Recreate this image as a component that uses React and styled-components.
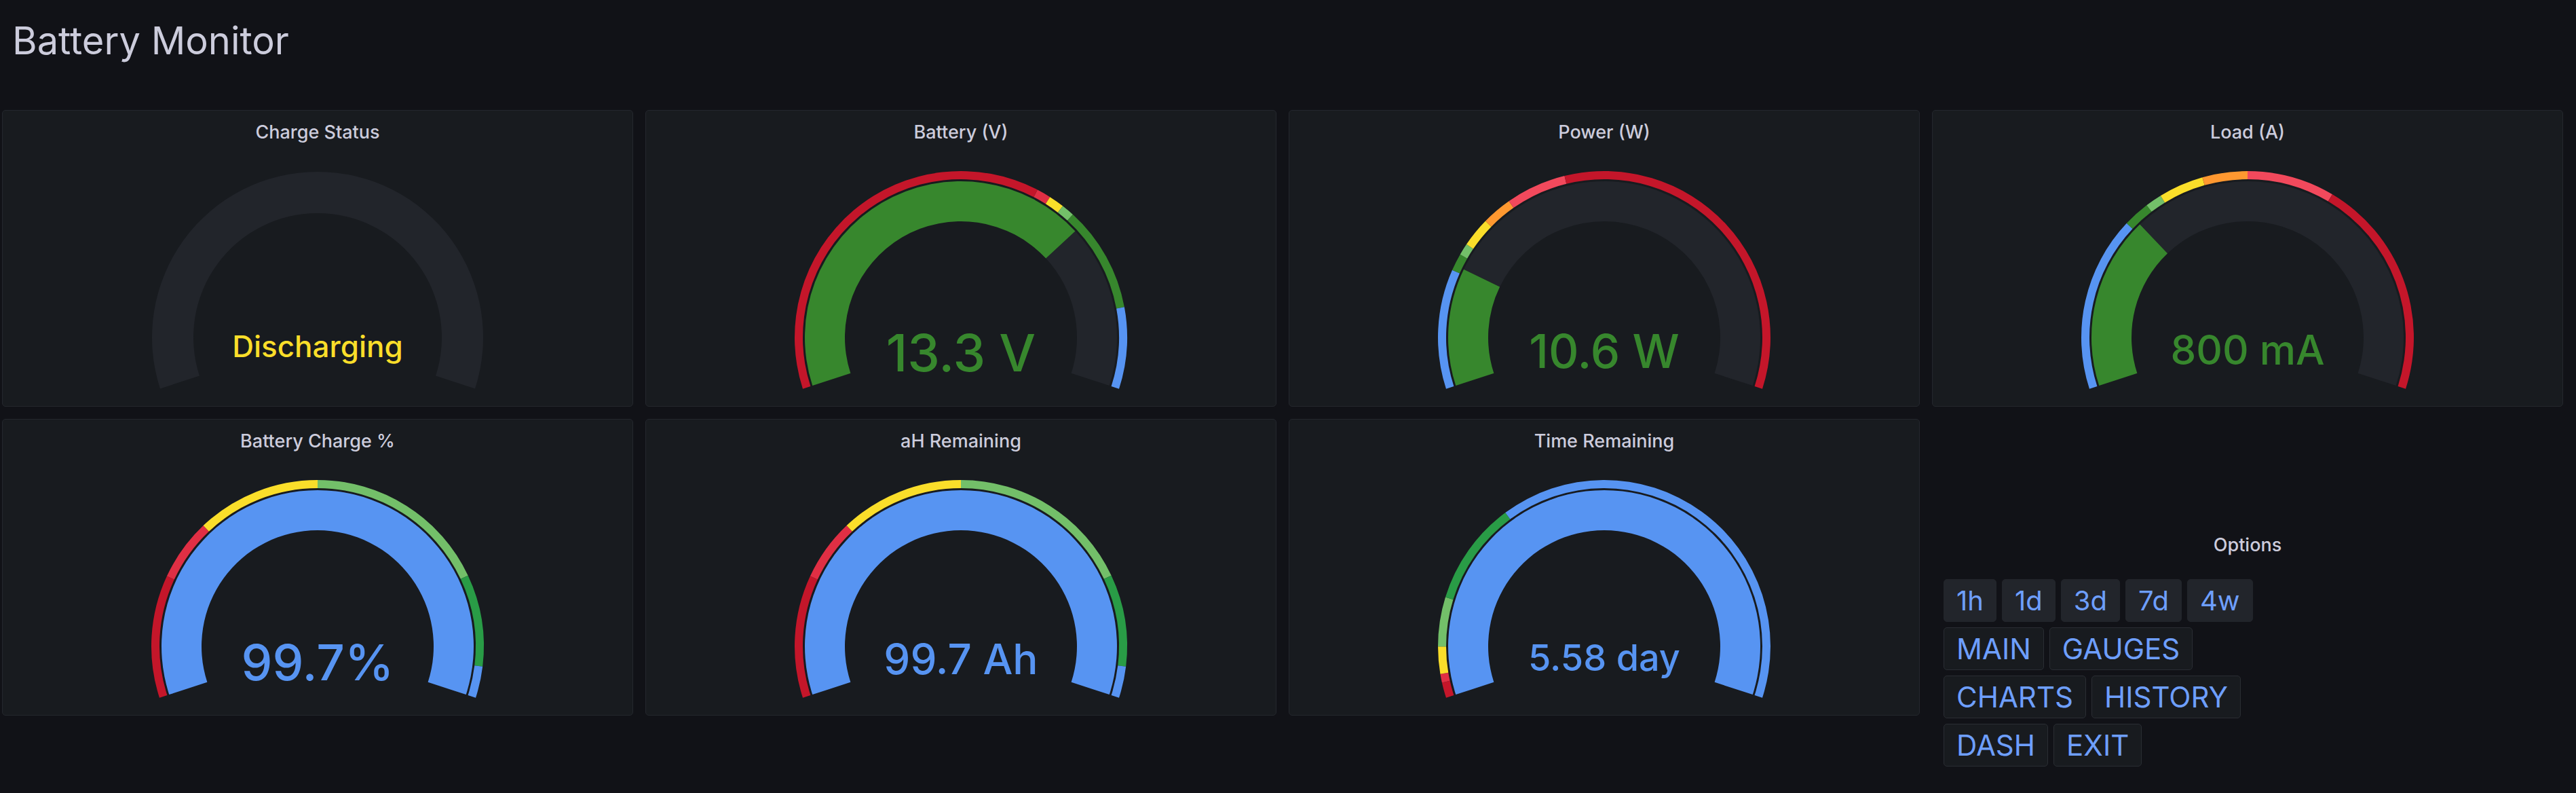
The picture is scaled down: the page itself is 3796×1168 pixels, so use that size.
import React from 'react'
import styled, { createGlobalStyle } from 'styled-components'

const GlobalStyle = createGlobalStyle`
  html, body {
    margin: 0;
    background: #111217;
  }
  body {
    font-family: Inter, 'Noto Sans', sans-serif;
    color: #ccccdc;
    overflow: hidden;
  }
`

const C = {
  darkRed: '#c4162a',
  red: '#e02f44',
  lightRed: '#f2495c',
  orange: '#ff9830',
  yellow: '#fade2a',
  lightGreen: '#73bf69',
  green: '#299c46',
  darkGreen: '#37872d',
  blue: '#5794f2',
  track: '#22252b',
}

// gauge sweeps 216deg, starting 18deg below the left horizontal
const START = 162
const SPAN = 216

const pt = (cx, cy, r, f) => {
  const a = ((START + SPAN * f) * Math.PI) / 180
  return [cx + r * Math.cos(a), cy + r * Math.sin(a)]
}

const sector = (cx, cy, r0, r1, f0, f1) => {
  const [x1, y1] = pt(cx, cy, r1, f0)
  const [x2, y2] = pt(cx, cy, r1, f1)
  const [x3, y3] = pt(cx, cy, r0, f1)
  const [x4, y4] = pt(cx, cy, r0, f0)
  const large = SPAN * (f1 - f0) > 180 ? 1 : 0
  return `M${x1} ${y1} A${r1} ${r1} 0 ${large} 1 ${x2} ${y2} L${x3} ${y3} A${r0} ${r0} 0 ${large} 0 ${x4} ${y4} Z`
}

const redToBlue = [
  [0.199, C.darkRed],
  [0.299, C.red],
  [0.5, C.yellow],
  [0.8, C.lightGreen],
  [0.949, C.green],
  [1, C.blue],
]

const gauges = [
  { title: 'Charge Status', text: 'Discharging', color: C.yellow, size: 44, dy: 29, plain: true },
  {
    title: 'Battery (V)', text: '13.3 V', color: C.darkGreen, size: 76, dy: 50, value: 0.718,
    bands: [[0.627, C.darkRed], [0.65, C.red], [0.675, C.yellow], [0.696, C.lightGreen], [0.868, C.darkGreen], [1, C.blue]],
  },
  {
    title: 'Power (W)', text: '10.6 W', color: C.darkGreen, size: 69, dy: 45, value: 0.203,
    bands: [[0.194, C.blue], [0.222, C.darkGreen], [0.241, C.lightGreen], [0.289, C.yellow], [0.338, C.orange], [0.436, C.lightRed], [1, C.darkRed]],
  },
  {
    title: 'Load (A)', text: '800 mA', color: C.darkGreen, size: 60, dy: 40, value: 0.298,
    bands: [[0.284, C.blue], [0.327, C.darkGreen], [0.354, C.lightGreen], [0.427, C.yellow], [0.5, C.orange], [0.642, C.lightRed], [1, C.darkRed]],
  },
  { title: 'Battery Charge %', text: '99.7%', color: C.blue, size: 73, dy: 50, value: 1, bands: redToBlue },
  { title: 'aH Remaining', text: '99.7 Ah', color: C.blue, size: 62, dy: 41, value: 1, bands: redToBlue },
  {
    title: 'Time Remaining', text: '5.58 day', color: C.blue, size: 54, dy: 36, value: 1,
    bands: [[0.025, C.darkRed], [0.039, C.red], [0.083, C.yellow], [0.163, C.lightGreen], [0.331, C.green], [1, C.blue]],
  },
]

const timeLinks = ['1h', '1d', '3d', '7d', '4w']
const navRows = [['MAIN', 'GAUGES'], ['CHARTS', 'HISTORY'], ['DASH', 'EXIT']]

const W = 928
const H = 373
const CX = 464
const CY = 272

const Gauge = ({ g }) => {
  let from = 0
  return (
    <GaugeSvg viewBox={`0 0 ${W} ${H}`}>
      {g.plain ? (
        <path d={sector(CX, CY, 183, 244, 0, 1)} fill={C.track} />
      ) : (
        <>
          {g.bands.map(([to, color]) => {
            const d = sector(CX, CY, 233, 245, from, to)
            from = to
            return <path key={to} d={d} fill={color} />
          })}
          {g.value < 1 && <path d={sector(CX, CY, 171, 230, g.value, 1)} fill={C.track} />}
          <path d={sector(CX, CY, 171, 230, 0, g.value)} fill={g.color} />
        </>
      )}
      <ValueText x={CX} y={CY + g.dy} fill={g.color} fontSize={g.size} textAnchor="middle">
        {g.text}
      </ValueText>
    </GaugeSvg>
  )
}

const App = () => (
  <>
    <GlobalStyle />
    <Page>
      <DashTitle>Battery Monitor</DashTitle>
      <Grid>
        {gauges.map(g => (
          <Panel key={g.title}>
            <PanelTitle>{g.title}</PanelTitle>
            <Gauge g={g} />
          </Panel>
        ))}
        <OptionsPanel>
          <PanelTitle>Options</PanelTitle>
          <Links>
            <LinkRow>
              {timeLinks.map(t => (
                <LinkButton key={t} $filled>{t}</LinkButton>
              ))}
            </LinkRow>
            {navRows.map(row => (
              <LinkRow key={row[0]}>
                {row.map(t => (
                  <LinkButton key={t}>{t}</LinkButton>
                ))}
              </LinkRow>
            ))}
          </Links>
        </OptionsPanel>
      </Grid>
    </Page>
  </>
)

export default App

const Page = styled.div`
  width: 3796px;
  height: 1168px;
  padding: 0 19px 0 3px;
  box-sizing: border-box;
`

const DashTitle = styled.h1`
  margin: 0 0 68px 15px;
  padding-top: 26px;
  font-size: 56px;
  line-height: 68px;
  font-weight: 400;
  color: #ccccdc;
`

const Grid = styled.div`
  display: grid;
  grid-template-columns: repeat(4, 1fr);
  grid-template-rows: 437px 437px;
  gap: 18px;
`

const Panel = styled.section`
  display: flex;
  flex-direction: column;
  background: #181b1f;
  border: 1px solid #24272d;
  border-radius: 5px;
  overflow: hidden;
`

const PanelTitle = styled.h2`
  margin: 0;
  padding: 16px 16px 14px;
  height: 32px;
  font-size: 27px;
  line-height: 32px;
  font-weight: 500;
  text-align: center;
  color: #ccccdc;
`

const GaugeSvg = styled.svg`
  display: block;
  width: 100%;
  flex: 1;
`

const ValueText = styled.text`
  font-family: Inter, 'Noto Sans', sans-serif;
  font-weight: 500;
`

const OptionsPanel = styled.section`
  grid-column: 4;
  grid-row: 2;
  align-self: start;
  margin-top: 153px;
  border: 1px solid transparent;
`

const Links = styled.div`
  display: flex;
  flex-direction: column;
  gap: 8px;
  padding: 20px 16px 0;
`

const LinkRow = styled.div`
  display: flex;
  gap: 8px;
`

const LinkButton = styled.a`
  display: block;
  height: 63px;
  box-sizing: border-box;
  padding: 0 18px;
  font-size: ${p => (p.$filled ? '40px' : '42px')};
  line-height: 61px;
  color: #6e9fff;
  background: ${p => (p.$filled ? '#22252b' : '#181b1f')};
  border: 1px solid ${p => (p.$filled ? '#22252b' : '#2a2d33')};
  border-radius: 5px;
  cursor: pointer;
`
